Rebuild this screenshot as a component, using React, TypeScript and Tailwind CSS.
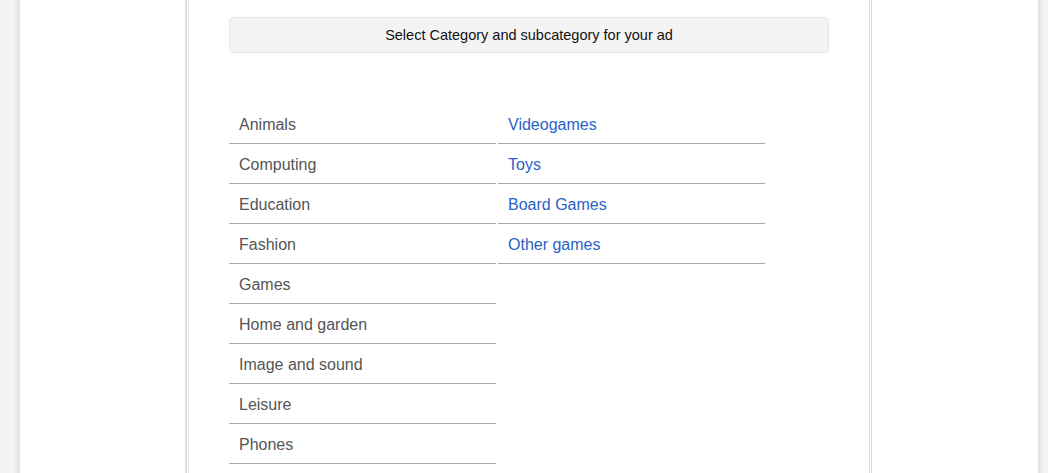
import React from "react";

const cats = [
  "Animals",
  "Computing",
  "Education",
  "Fashion",
  "Games",
  "Home and garden",
  "Image and sound",
  "Leisure",
  "Phones",
];
const subs = ["Videogames", "Toys", "Board Games", "Other games"];

export default function App() {
  return (
    <div
      className="flex h-[473px] w-[1048px] overflow-hidden bg-[#f4f4f4]"
      style={{ fontFamily: '"Liberation Sans", Arial, sans-serif' }}
    >
      <div className="w-[15px] shrink-0" />
      <div className="w-[5px] shrink-0 bg-gradient-to-r from-[#efefef] to-[#e2e2e2]" />
      <div className="flex w-[1018px] shrink-0 bg-white">
        <div className="w-[167px] shrink-0 border-r-2 border-[#dcdcdc]" />
        <div className="w-px shrink-0 bg-white" />
        <div className="w-px shrink-0 bg-[#e3e3e3]" />
        <div className="w-[680px] shrink-0 px-10 pt-[17px]">
          <div className="flex h-[36px] items-center justify-center rounded-[4px] border border-[#e6e6e6] bg-[#f4f4f4] pt-px text-[14.5px] text-[#111]">
            Select Category and subcategory for your ad
          </div>
          <div className="mt-[51px] flex gap-[2px]">
            <div className="w-[267px]">
              {cats.map((c) => (
                <div
                  key={c}
                  className="flex h-[40px] items-center border-b border-[#a9a9a9] pl-[10px] pt-[2px] text-[16px] text-[#555]"
                >
                  {c}
                </div>
              ))}
              <div className="h-[40px]" />
            </div>
            <div className="w-[267px]">
              {subs.map((c) => (
                <div
                  key={c}
                  className="flex h-[40px] items-center border-b border-[#a9a9a9] pl-[10px] pt-[2px] text-[16px] text-[#2a62c5]"
                >
                  {c}
                </div>
              ))}
            </div>
          </div>
        </div>
        <div className="w-px shrink-0 bg-[#dcdcdc]" />
        <div className="w-px shrink-0 bg-white" />
        <div className="w-px shrink-0 bg-[#dcdcdc]" />
        <div className="flex-1" />
      </div>
      <div className="w-[5px] shrink-0 bg-gradient-to-r from-[#e2e2e2] to-[#efefef]" />
    </div>
  );
}
